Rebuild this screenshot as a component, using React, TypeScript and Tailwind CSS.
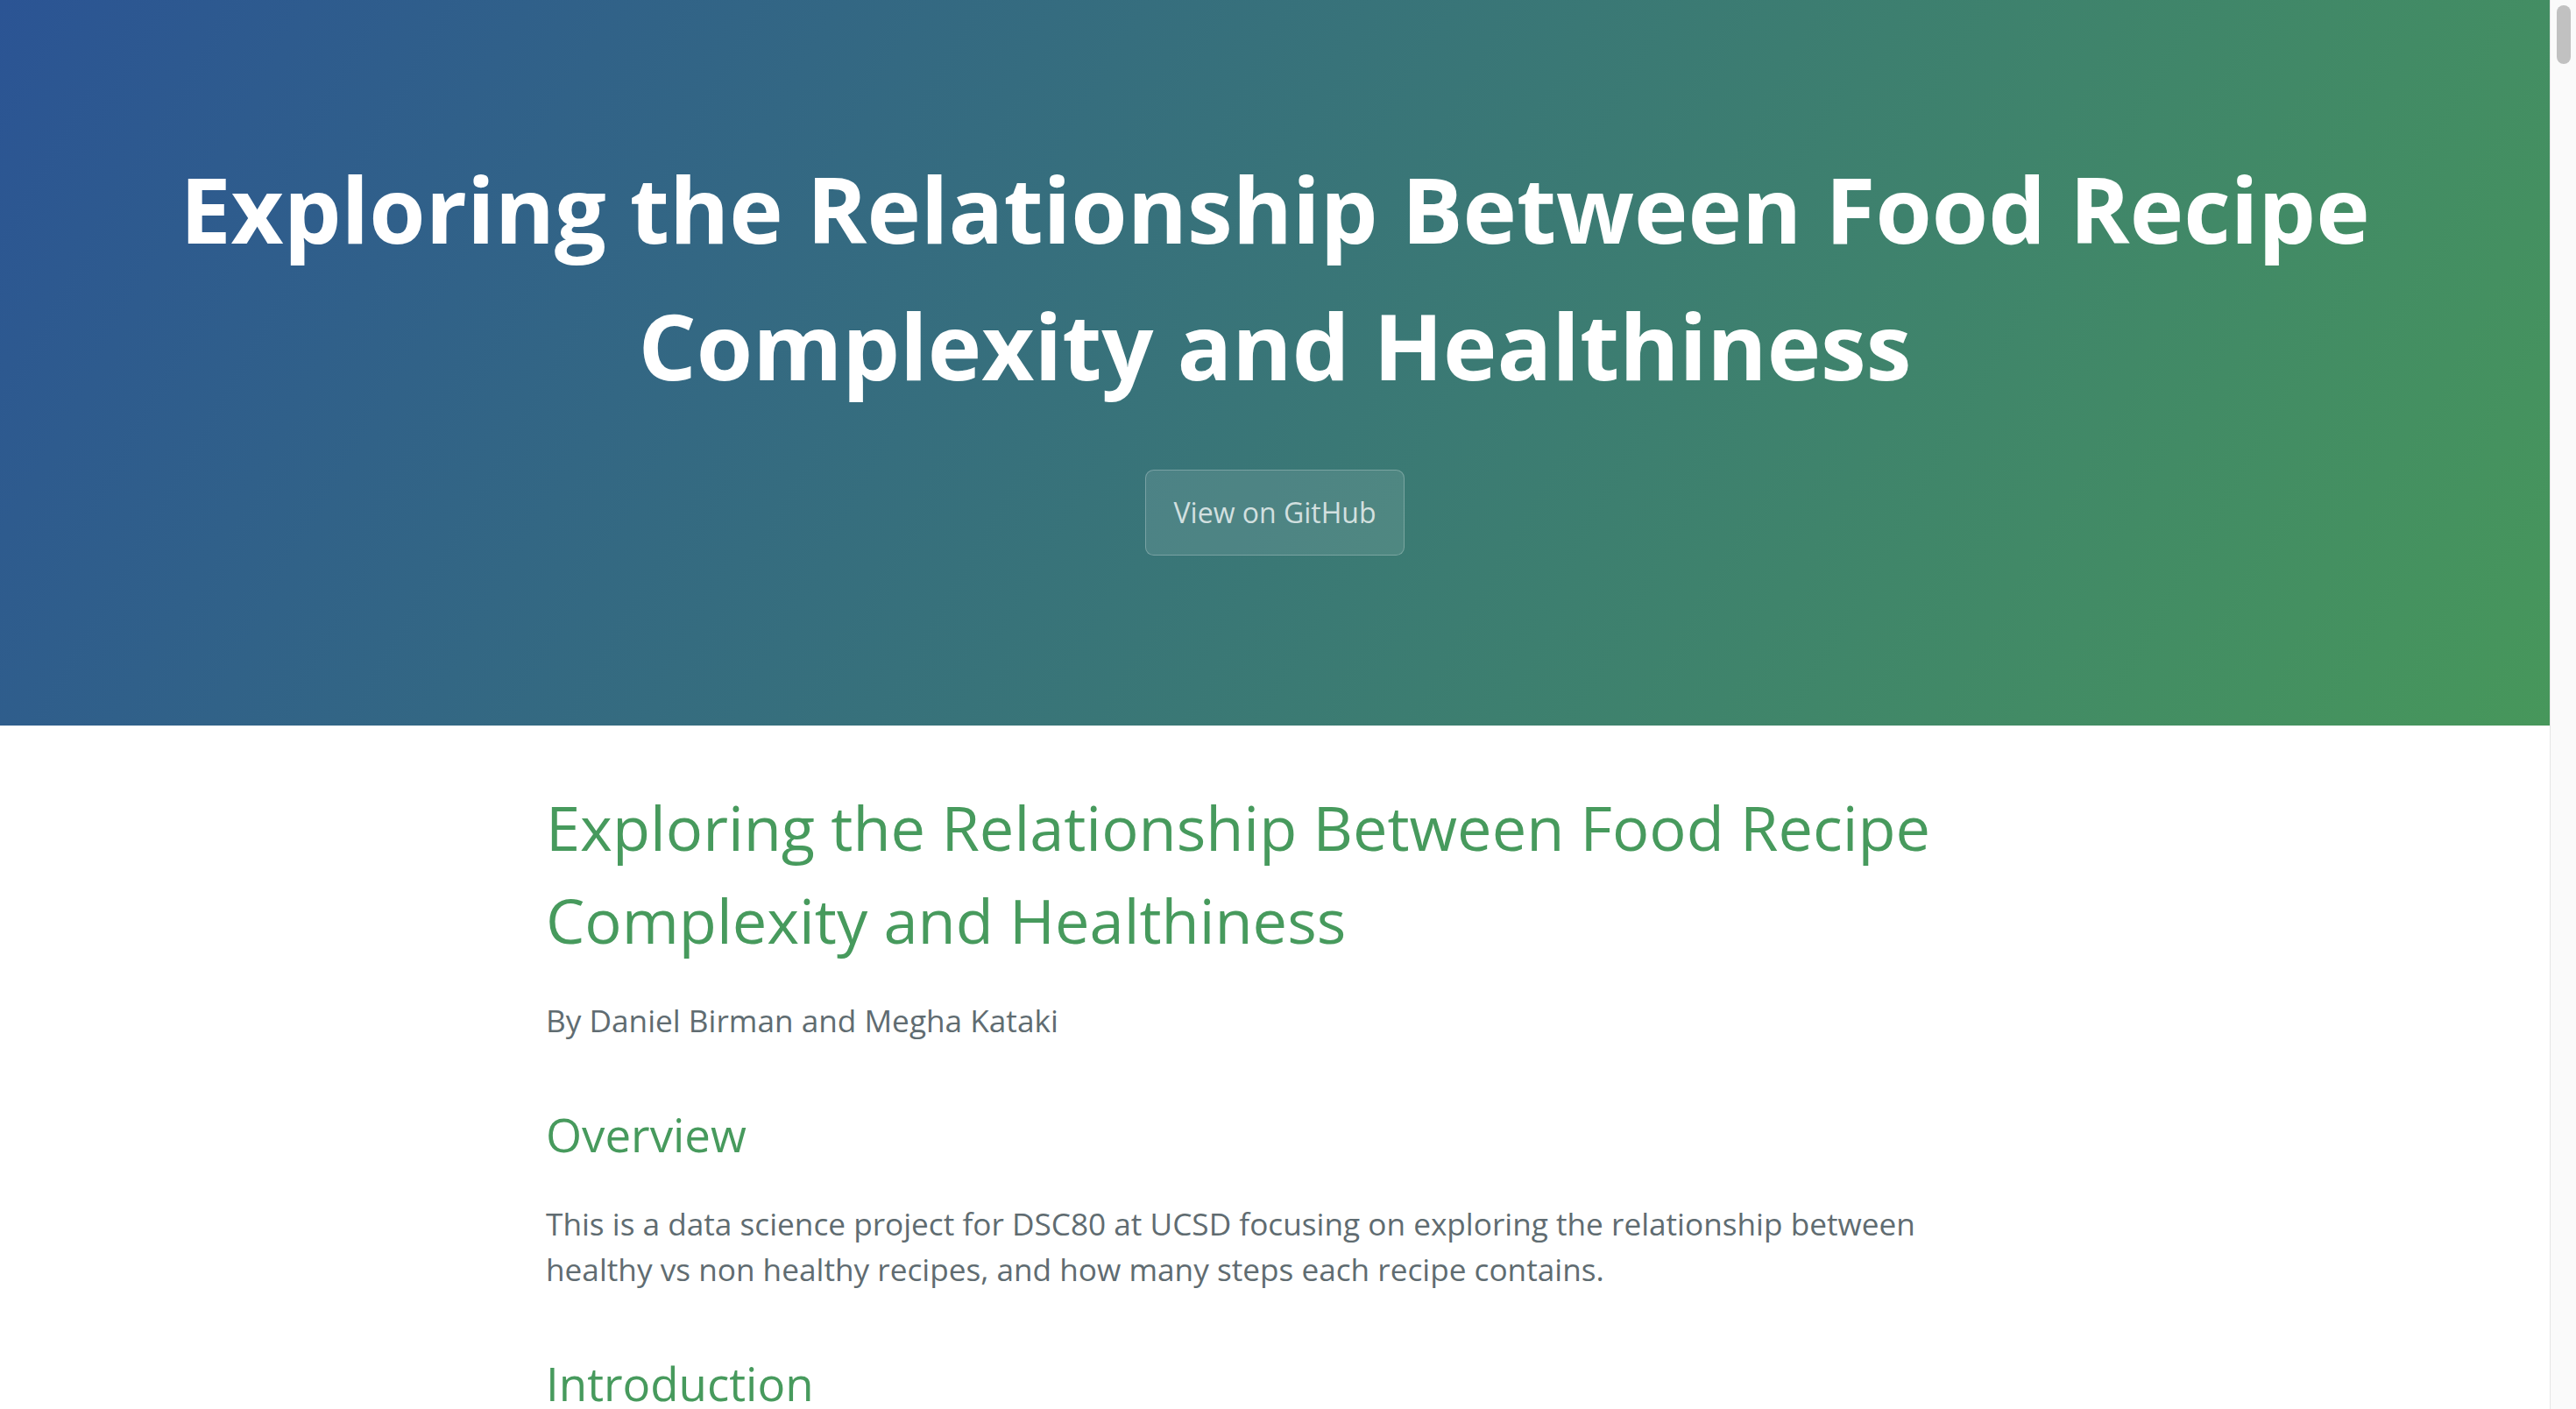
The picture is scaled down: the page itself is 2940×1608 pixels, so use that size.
export default function App() {
  return (
    <div className="flex h-[1608px] w-full overflow-hidden bg-white font-['Open_Sans','Helvetica_Neue',Helvetica,Arial,sans-serif]">
      <div className="h-full min-w-0 flex-1 overflow-hidden">
        <header className="bg-[linear-gradient(120deg,#2b5494,#47975b)] px-[192px] pt-[160px] pb-[162px] text-center text-white">
          <h1 className="m-0 text-[104px] font-bold leading-[1.5]">
            Exploring the Relationship Between Food Recipe Complexity and Healthiness
          </h1>
          <a
            href="#"
            className="mt-[64px] mb-[32px] inline-block rounded-[9.6px] border border-white/25 bg-white/[0.1] px-[32px] py-[24px] text-[32px] leading-[48px] text-white/75"
          >
            View on GitHub
          </a>
        </header>

        <main className="mx-auto max-w-[2048px] px-[192px] py-[64px] text-[35.2px] leading-[1.5] text-[#606c71]">
          <h1 className="mt-0 mb-[32px] text-[70.4px] font-normal leading-[1.5] text-[#479a5d]">
            Exploring the Relationship Between Food Recipe Complexity and Healthiness
          </h1>
          <p className="my-[35.2px]">By Daniel Birman and Megha Kataki</p>

          <h2 className="mt-[64px] mb-[32px] text-[52.8px] font-normal leading-[1.5] text-[#479a5d]">Overview</h2>
          <p className="my-[35.2px]">
            This is a data science project for DSC80 at UCSD focusing on exploring the relationship between
            healthy vs non healthy recipes, and how many steps each recipe contains.
          </p>

          <h2 className="mt-[64px] mb-[32px] text-[52.8px] font-normal leading-[1.5] text-[#479a5d]">Introduction</h2>
        </main>
      </div>

      {/* browser scrollbar */}
      <div className="h-full w-[30px] shrink-0 border-l border-[#e6e6e6] bg-[#fafafa] pt-[6px] pl-[7px]">
        <div className="h-[67px] w-[16px] rounded-full bg-[#c1c1c1]" />
      </div>
    </div>
  )
}
